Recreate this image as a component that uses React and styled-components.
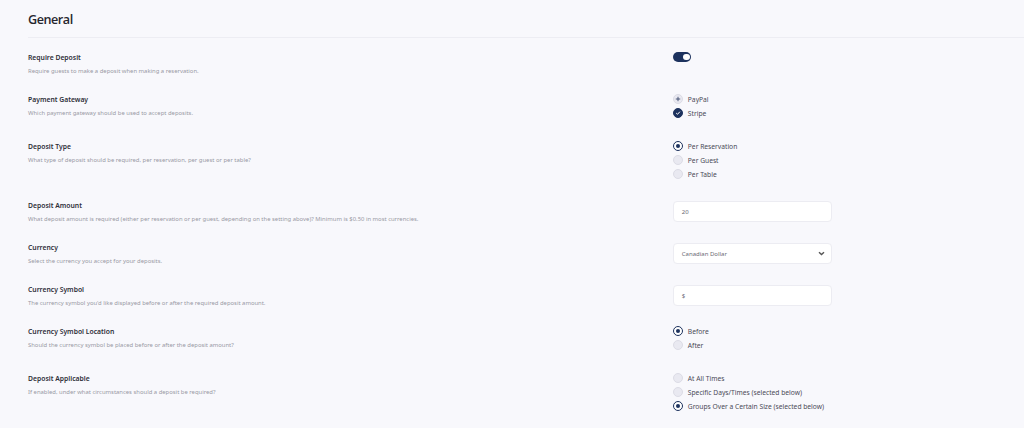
import React from "react";
import styled, { createGlobalStyle } from "styled-components";

const GlobalStyle = createGlobalStyle`
  html, body { margin: 0; padding: 0; background: #f8f8fc; }
  body { font-family: "Noto Sans", "Open Sans", sans-serif; }
  * { box-sizing: border-box; }
`;

const Page = styled.div`
  width: 1024px;
  min-height: 428px;
  background: #f8f8fc;
  overflow: hidden;
`;

const Header = styled.div`
  margin-left: 28px;
  padding-top: 11px;
  padding-bottom: 8px;
  border-bottom: 1.5px solid #ededf3;
`;

const Heading = styled.h1`
  margin: 0;
  font-family: "Open Sans", sans-serif;
  font-size: 12.6px;
  line-height: 18px;
  font-weight: 600;
  letter-spacing: -0.45px;
  color: #26262e;
`;

const Settings = styled.div`
  padding: 14px 28px 0 28px;
`;

const Row = styled.div`
  display: grid;
  grid-template-columns: 2fr 1fr;
  padding-bottom: ${(p) => p.$gap}px;
`;

const Label = styled.div`
  display: flex;
  flex-direction: column;
`;

const Title = styled.div`
  font-size: 6.8px;
  line-height: 12px;
  font-weight: 600;
  color: #2e2e38;
  margin-bottom: 2px;
`;

const Desc = styled.div`
  font-size: 5.9px;
  line-height: 10px;
  color: #9898a4;
`;

const Control = styled.div`
  display: flex;
  flex-direction: column;
  margin-top: -2px;
`;

const Toggle = styled.div`
  margin-top: 2px;
  width: 18px;
  height: 9.5px;
  border-radius: 5px;
  background: #1d325e;
  display: flex;
  align-items: center;
  justify-content: flex-end;
  padding-right: 1.5px;
`;

const Knob = styled.span`
  width: 6.5px;
  height: 6.5px;
  border-radius: 50%;
  background: #fff;
`;

const Option = styled.div`
  display: flex;
  align-items: center;
  height: 14px;
  gap: 4.5px;
  font-size: 6.7px;
  color: #4a4a56;
`;

const Circle = styled.span`
  width: 10px;
  height: 10px;
  border-radius: 50%;
  flex: none;
  display: flex;
  align-items: center;
  justify-content: center;
  background: ${(p) => (p.$filled ? "#1d325e" : p.$on ? "#fff" : "#e9e9f1")};
  border: 1px solid ${(p) => (p.$filled || p.$on ? "#1d325e" : "#dcdce6")};
`;

const Dot = styled.span`
  width: 4px;
  height: 4px;
  border-radius: 50%;
  background: #1d325e;
`;

const Field = styled.div`
  margin-top: 3px;
  width: 159px;
  height: 21px;
  background: #fff;
  border: 1px solid #ececf2;
  border-radius: 4px;
  display: flex;
  align-items: center;
  justify-content: space-between;
  padding: 0 6px 0 7.5px;
  font-size: 6px;
  color: #6a6a74;
`;

const Chevron = () => (
  <svg width="7" height="5" viewBox="0 0 7 5">
    <path d="M1 1.2 L3.5 3.6 L6 1.2" fill="none" stroke="#555" strokeWidth="1.4" />
  </svg>
);

const Check = () => (
  <svg width="6" height="6" viewBox="0 0 6 6">
    <path d="M1.2 3.1 L2.5 4.3 L4.9 1.7" fill="none" stroke="#fff" strokeWidth="1" />
  </svg>
);

const Plus = () => (
  <svg width="6" height="6" viewBox="0 0 6 6">
    <path d="M3 0.8 V5.2 M0.8 3 H5.2" fill="none" stroke="#3d4a6e" strokeWidth="0.9" />
  </svg>
);

const Checkbox = ({ checked, label }) => (
  <Option>
    <Circle $filled={checked}>{checked ? <Check /> : <Plus />}</Circle>
    {label}
  </Option>
);

const Radio = ({ checked, label }) => (
  <Option>
    <Circle $on={checked}>{checked && <Dot />}</Circle>
    {label}
  </Option>
);

const Setting = ({ title, desc, gap = 18, children }) => (
  <Row $gap={gap}>
    <Label>
      <Title>{title}</Title>
      <Desc>{desc}</Desc>
    </Label>
    <Control>{children}</Control>
  </Row>
);

export default function App() {
  return (
    <Page>
      <GlobalStyle />
      <Header>
        <Heading>General</Heading>
      </Header>
      <Settings>
        <Setting title="Require Deposit" desc="Require guests to make a deposit when making a reservation.">
          <Toggle>
            <Knob />
          </Toggle>
        </Setting>
        <Setting title="Payment Gateway" desc="Which payment gateway should be used to accept deposits." gap={21}>
          <Checkbox label="PayPal" />
          <Checkbox checked label="Stripe" />
        </Setting>
        <Setting
          title="Deposit Type"
          desc="What type of deposit should be required, per reservation, per guest or per table?"
          gap={19}
        >
          <Radio checked label="Per Reservation" />
          <Radio label="Per Guest" />
          <Radio label="Per Table" />
        </Setting>
        <Setting
          title="Deposit Amount"
          desc="What deposit amount is required (either per reservation or per guest, depending on the setting above)? Minimum is $0.50 in most currencies."
        >
          <Field>20</Field>
        </Setting>
        <Setting title="Currency" desc="Select the currency you accept for your deposits.">
          <Field>
            Canadian Dollar
            <Chevron />
          </Field>
        </Setting>
        <Setting
          title="Currency Symbol"
          desc="The currency symbol you'd like displayed before or after the required deposit amount."
        >
          <Field>$</Field>
        </Setting>
        <Setting
          title="Currency Symbol Location"
          desc="Should the currency symbol be placed before or after the deposit amount?"
          gap={21}
        >
          <Radio checked label="Before" />
          <Radio label="After" />
        </Setting>
        <Setting
          title="Deposit Applicable"
          desc="If enabled, under what circumstances should a deposit be required?"
        >
          <Radio label="At All Times" />
          <Radio label="Specific Days/Times (selected below)" />
          <Radio checked label="Groups Over a Certain Size (selected below)" />
        </Setting>
      </Settings>
    </Page>
  );
}
